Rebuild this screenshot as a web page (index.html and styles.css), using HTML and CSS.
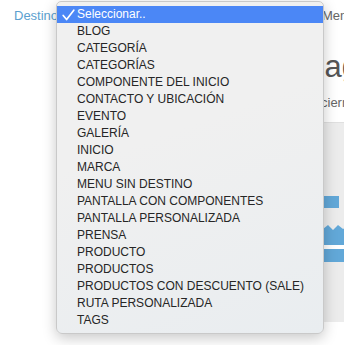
FILE: index.html
```html
<!DOCTYPE html>
<html lang="es">
<head>
    <meta charset="UTF-8" />
    <meta name="viewport" content="width=device-width, initial-scale=1.0" />
    <title>Menú</title>
    <link rel="stylesheet" href="styles.css">
</head>
<body>
  <div class="pagina">
    <div class="fila">
      <label class="etiqueta" for="destino">Destino</label>
      <div class="selector" id="destino">Seleccionar..</div>
      <span class="etiqueta-gris">Menú</span>
    </div>

    <div class="bloque">
      <h1 class="titulo">Imagen</h1>
      <p class="texto">cierre</p>
    </div>

    <div class="panel">
      <div class="vista">
        <svg width="24" height="68" viewBox="0 0 24 68">
          <rect x="0" y="0" width="16" height="12" fill="#62a8d8" />
          <path d="M0 33 L5 29 L10 34 L15 29 L20 33 L24 31 L24 49 L0 49 Z" fill="#62a8d8" />
          <rect x="0" y="49" width="24" height="4" fill="#fff" />
          <rect x="0" y="53" width="24" height="13" fill="#62a8d8" />
        </svg>
      </div>
    </div>
  </div>

  <ul class="menu">
    <li class="opcion activa">
      <svg class="check" width="13" height="12" viewBox="0 0 13 12">
        <path d="M1.2 6.5 L4.6 10.5 L11.8 1.2" fill="none" stroke="#fff" stroke-width="1.7" stroke-linecap="round" stroke-linejoin="round" />
      </svg>Seleccionar..</li>
    <li class="opcion">BLOG</li>
    <li class="opcion">CATEGORÍA</li>
    <li class="opcion">CATEGORÍAS</li>
    <li class="opcion">COMPONENTE DEL INICIO</li>
    <li class="opcion">CONTACTO Y UBICACIÓN</li>
    <li class="opcion">EVENTO</li>
    <li class="opcion">GALERÍA</li>
    <li class="opcion">INICIO</li>
    <li class="opcion">MARCA</li>
    <li class="opcion">MENU SIN DESTINO</li>
    <li class="opcion">PANTALLA CON COMPONENTES</li>
    <li class="opcion">PANTALLA PERSONALIZADA</li>
    <li class="opcion">PRENSA</li>
    <li class="opcion">PRODUCTO</li>
    <li class="opcion">PRODUCTOS</li>
    <li class="opcion">PRODUCTOS CON DESCUENTO (SALE)</li>
    <li class="opcion">RUTA PERSONALIZADA</li>
    <li class="opcion">TAGS</li>
  </ul>
</body>
</html>
```

FILE: styles.css
```css
body {
    margin: 0;
    background: #fff;
    font-family: "Liberation Sans", Arial, sans-serif;
    width: 344px;
    height: 345px;
    overflow: hidden;
    position: relative;
}

.pagina {
    width: 344px;
    overflow: hidden;
}

.fila {
    display: flex;
    align-items: center;
    height: 30px;
    padding-left: 14px;
}

.etiqueta {
    color: #5b9fcf;
    font-size: 13px;
    width: 56px;
    flex-shrink: 0;
}

.selector {
    width: 252px;
    flex-shrink: 0;
    font-size: 13px;
    color: #333;
}

.etiqueta-gris {
    color: #666;
    font-size: 13px;
    white-space: nowrap;
}

.bloque {
    height: 92px;
    padding-left: 290px;
    box-sizing: border-box;
    padding-top: 19px;
}

.titulo {
    margin: 0;
    font-weight: normal;
    font-size: 31px;
    color: #555;
    line-height: 36px;
    white-space: nowrap;
}

.texto {
    margin: 10px 0 0 31px;
    font-size: 13px;
    color: #666;
    white-space: nowrap;
}

.panel {
    border-top: 1px solid #e0e0e0;
    background: #ececec;
    height: 199px;
    margin-left: 240px;
}

.vista {
    padding: 73px 0 0 83px;
}

.vista svg {
    display: block;
}

.menu {
    position: absolute;
    left: 56px;
    top: 1px;
    width: 266px;
    height: 323px;
    margin: 0;
    padding: 4px 0;
    list-style: none;
    background: linear-gradient(160deg, #f0f0f0 40%, #e9edf0 100%);
    border: 1px solid #c9c9c9;
    border-radius: 5px 5px 6px 6px;
    box-shadow: 0 4px 14px rgba(0, 0, 0, 0.22);
}

.opcion {
    height: 17px;
    line-height: 17px;
    font-size: 12px;
    color: #262626;
    padding-left: 20px;
    white-space: nowrap;
    position: relative;
}

.opcion.activa {
    background: #4b87f6;
    color: #fff;
}

.check {
    position: absolute;
    left: 5px;
    top: 3px;
}
```
